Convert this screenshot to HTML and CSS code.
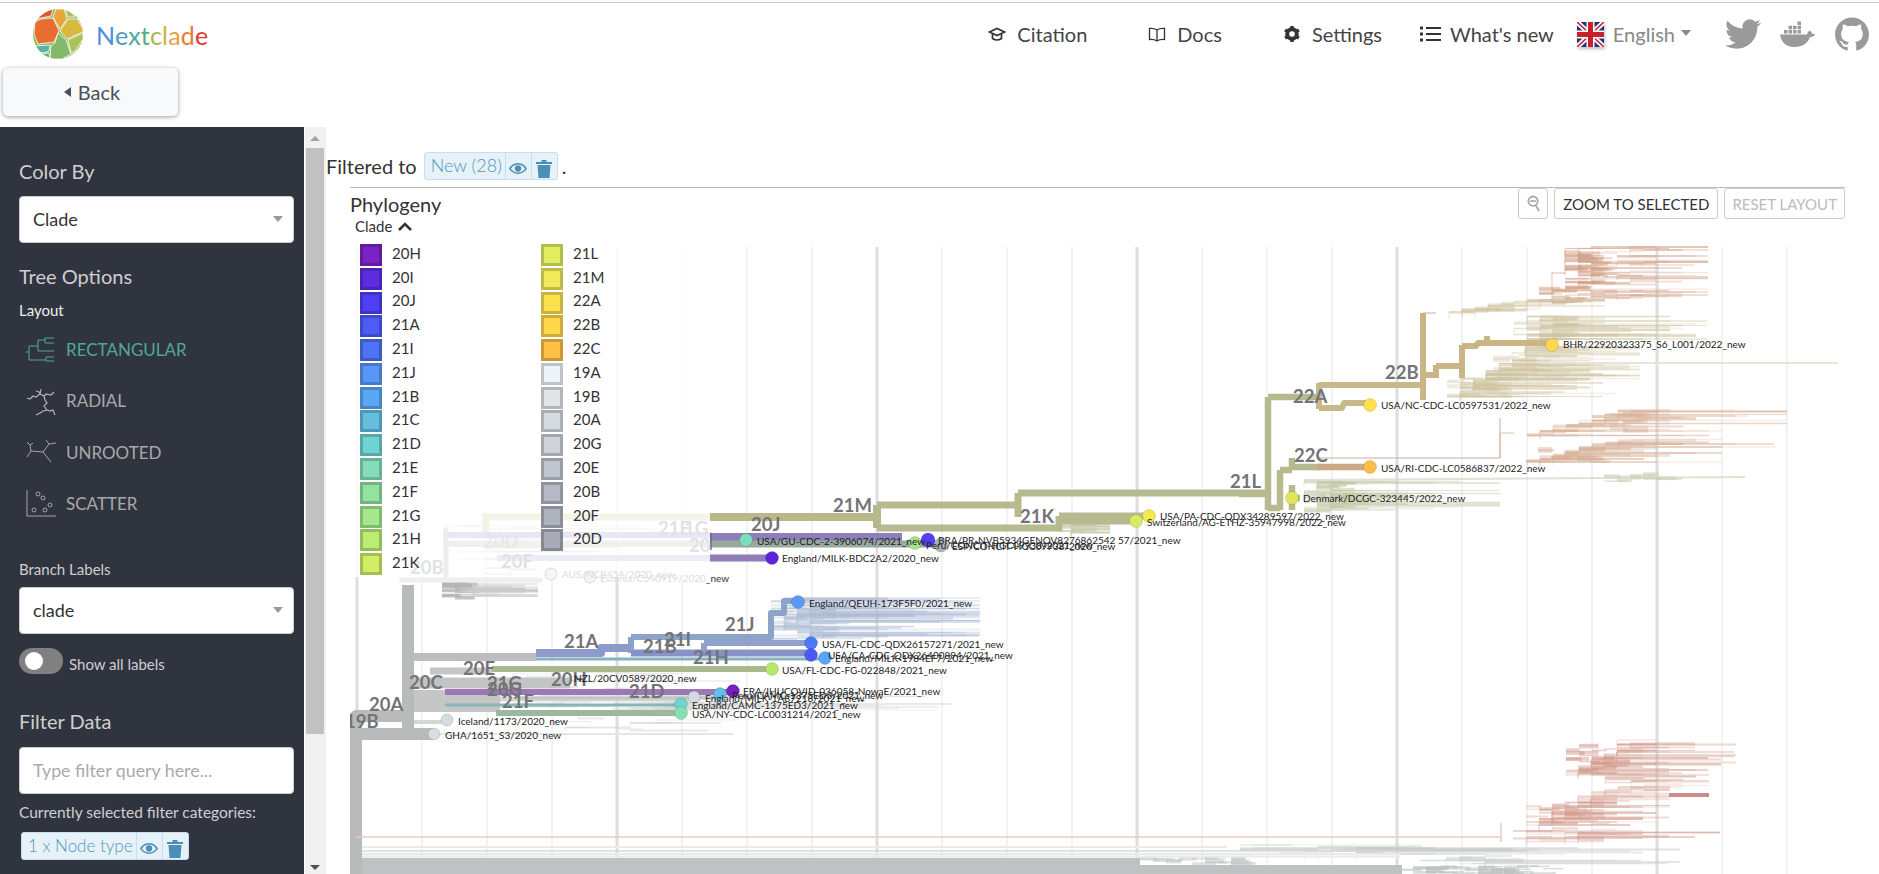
FILE: index.html
```html
<!DOCTYPE html>
<html lang="en">
<head>
 <meta charset="UTF-8">
 <title>Nextclade</title>
 <link rel="stylesheet" href="styles.css">
 <script src="tree.js" defer></script>
</head>
<body>

<!-- Kopfzeile -->
<header class="topbar">
 <a class="brand">
  <svg class="brand-logo" viewBox="0 0 50 50" width="50" height="50">
   <defs><clipPath id="logoclip"><circle cx="25" cy="25" r="25"/></clipPath></defs>
   <g clip-path="url(#logoclip)" stroke="#fff" stroke-width="0.8">
    <rect width="50" height="50" fill="#8fbb60" stroke="none"/>
    <polygon fill="#e96d30" points="2,13 8,10 20,9 26,22 21,33 5,35 1,25"/>
    <polygon fill="#e8a53a" points="20,8 23,0 31,0 34,10 27,20"/>
    <polygon fill="#d6b93e" points="35,10 44,10 50,20 50,23 34,30 27,22"/>
    <polygon fill="#a8c256" points="35,31 50,24 50,30 42,42 38,44"/>
    <polygon fill="#84b96a" points="25,24 33,31 38,45 29,50 17,50 18,37 22,34"/>
    <polygon fill="#5fb0a6" points="0,37 17,36 16,42 10,44 4,42"/>
    <polygon fill="#e2563a" points="3,9 12,1 20,0 18,7 8,9"/>
    <polygon fill="#b3bd58" points="32,0 38,3 42,8 35,8"/>
    <polygon fill="#5fa982" points="10,45 16,44 17,50 10,50"/>
    <polygon fill="#a8c256" points="39,45 44,42 50,50 40,50"/>
   </g>
  </svg>
  <span class="brand-name"><i class="c1">N</i><i class="c2">e</i><i class="c3">x</i><i class="c4">t</i><i class="c5">c</i><i class="c6">l</i><i class="c7">a</i><i class="c8">d</i><i class="c9">e</i></span>
 </a>

 <nav class="nav">
  <a class="nav-link nav-citation">
   <svg viewBox="0 0 18 18" width="18" height="18" fill="none" stroke="#333" stroke-width="1.7"><path d="M1.5 7 9 3.5 16.5 7 9 10.5Z"/><path d="M4.5 9v4.5Q9 16.500 13.500 13.500V9"/></svg>
   Citation
  </a>
  <a class="nav-link nav-docs">
   <svg viewBox="0 0 18 18" width="18" height="18" fill="none" stroke="#333" stroke-width="1.3"><path d="M9 5Q6 3 1.500 3.500V14.500Q6 14 9 16Q12 14 16.500 14.500V3.500Q12 3 9 5ZM9 5V16"/></svg>
   Docs
  </a>
  <a class="nav-link nav-settings">
   <svg viewBox="0 0 18 18" width="18" height="18"><circle cx="9" cy="9" r="5" fill="none" stroke="#333" stroke-width="3.600"/><g stroke="#333" stroke-width="3.400"><path d="M9 1v16"/><path d="M2.100 5 15.900 13"/><path d="M2.100 13 15.900 5"/></g><circle cx="9" cy="9" r="2.800" fill="#fff"/></svg>
   Settings
  </a>
  <a class="nav-link nav-new">
   <svg viewBox="0 0 21 18" width="21" height="18" fill="#333"><rect x="0" y="1.500" width="3" height="3"/><rect x="0" y="7.500" width="3" height="3"/><rect x="0" y="13.500" width="3" height="3"/><rect x="6" y="2" width="15" height="2"/><rect x="6" y="8" width="15" height="2"/><rect x="6" y="14" width="15" height="2"/></svg>
   What's new
  </a>
  <a class="lang">
   <svg class="lang-flag" viewBox="0 0 27 25" width="27" height="25">
    <rect width="27" height="25" fill="#22337a"/>
    <path d="M0 0 27 25M27 0 0 25" stroke="#fff" stroke-width="5"/>
    <path d="M0 0 27 25M27 0 0 25" stroke="#c8202f" stroke-width="1.600"/>
    <path d="M13.500 0V25M0 12.500H27" stroke="#fff" stroke-width="8"/>
    <path d="M13.500 0V25M0 12.500H27" stroke="#c8202f" stroke-width="5"/>
   </svg>
   English<span class="lang-caret"></span>
  </a>
  <svg class="soc soc-twitter" viewBox="0 0 24 24" width="36" height="36" fill="#9a9a9a"><path d="M23.953 4.57a10 10 0 01-2.825.775 4.958 4.958 0 002.163-2.723c-.951.555-2.005.959-3.127 1.184a4.92 4.92 0 00-8.384 4.482C7.69 8.095 4.067 6.13 1.64 3.162a4.822 4.822 0 00-.666 2.475c0 1.71.87 3.213 2.188 4.096a4.904 4.904 0 01-2.228-.616v.06a4.923 4.923 0 003.946 4.827 4.996 4.996 0 01-2.212.085 4.936 4.936 0 004.604 3.417 9.867 9.867 0 01-6.102 2.105c-.39 0-.779-.023-1.17-.067a13.995 13.995 0 007.557 2.209c9.053 0 13.998-7.496 13.998-13.985 0-.21 0-.42-.015-.63A9.935 9.935 0 0024 4.59z"/></svg>
  <svg class="soc soc-docker" viewBox="0 0 35 26" width="35" height="26" fill="#9a9a9a"><path d="M0 13.500H27C27.500 11 29 10 29.500 9.500C31 10.500 32 11.500 32 12.800C33 12.500 34 12.600 35 13.200C34 15.500 32 16 30 16C28 22 23 26 14 26C5 26 1 20 0 13.500Z"/><path d="M4 9h3.500v3.500H4zM8.500 9H12v3.500H8.500zM13 9h3.500v3.500H13zM17.500 9H21v3.500h-3.500zM8.500 4.800H12v3.500H8.500zM13 4.800h3.500v3.500H13zM17.500 4.800H21v3.500h-3.500zM17.500.5H21V4h-3.500z"/></svg>
  <svg class="soc soc-github" viewBox="0 0 24 24" width="34" height="34" fill="#9a9a9a"><path d="M12 .297c-6.63 0-12 5.373-12 12 0 5.303 3.438 9.8 8.205 11.385.6.113.82-.258.82-.577 0-.285-.01-1.04-.015-2.04-3.338.724-4.042-1.61-4.042-1.61C4.422 18.07 3.633 17.7 3.633 17.7c-1.087-.744.084-.729.084-.729 1.205.084 1.838 1.236 1.838 1.236 1.07 1.835 2.809 1.305 3.495.998.108-.776.417-1.305.76-1.605-2.665-.3-5.466-1.332-5.466-5.93 0-1.31.465-2.38 1.235-3.22-.135-.303-.54-1.523.105-3.176 0 0 1.005-.322 3.3 1.23.96-.267 1.98-.399 3-.405 1.02.006 2.04.138 3 .405 2.28-1.552 3.285-1.23 3.285-1.23.645 1.653.24 2.873.12 3.176.765.84 1.23 1.91 1.23 3.22 0 4.61-2.805 5.625-5.475 5.92.42.36.81 1.096.81 2.22 0 1.606-.015 2.896-.015 3.286 0 .315.21.69.825.57C20.565 22.092 24 17.592 24 12.297c0-6.627-5.373-12-12-12"/></svg>
 </nav>
</header>

<div class="backrow">
 <button class="back"><span class="back-caret"></span>Back</button>
</div>

<div class="page">

 <!-- Seitenleiste -->
 <aside class="sidebar">
  <h2 class="side-head side-colorby">Color By</h2>
  <div class="select select-colorby">Clade<span class="select-caret"></span></div>

  <h2 class="side-head side-tree">Tree Options</h2>
  <div class="side-label side-layout">Layout</div>
  <div class="layouts">
   <div class="layout layout-on">
    <svg viewBox="0 0 30 25" width="30" height="25" fill="none" stroke="#4fa79a" stroke-width="1"><path d="M0 15H3M3 9V23M3 9H12M12 3V14M12 3H19M19 1V6M19 1H28M19 6H28M12 14H28M3 23H20M20 20V24M20 20H28M20 24H28"/></svg>
    RECTANGULAR
   </div>
   <div class="layout">
    <svg viewBox="0 0 30 30" width="30" height="30" fill="none" stroke="#b5b5b5" stroke-width="1.200"><path d="M1 12 4 13 7 10 10 11 14 8 15 3M14 8 18 10 20 8 25 9 28 6M18 10 19 14 21 17 18 20 21 24M21 24 17 25 14 27 10 29M21 24 24 25 27 24 29 29M14 8 13 6 10 5"/></svg>
    RADIAL
   </div>
   <div class="layout">
    <svg viewBox="0 0 30 26" width="30" height="26" fill="none" stroke="#a5a5a5" stroke-width="1"><path d="M5 12 17 13M5 12 4 6 1 3M4 6 7 4M5 12 1 18M17 13 23 5 20 1M23 5 30 4M17 13 25 23"/></svg>
    UNROOTED
   </div>
   <div class="layout">
    <svg viewBox="0 0 30 27" width="30" height="27" fill="none" stroke="#a5a5a5" stroke-width="1"><path d="M1 0V26H30"/><circle cx="12" cy="4" r="2"/><circle cx="17" cy="8" r="2"/><circle cx="24" cy="15" r="2"/><circle cx="19" cy="20" r="2"/><circle cx="8" cy="20" r="2"/></svg>
    SCATTER
   </div>
  </div>

  <div class="side-label side-branch">Branch Labels</div>
  <div class="select select-branch">clade<span class="select-caret"></span></div>
  <div class="toggle"><span class="toggle-track"><span class="toggle-knob"></span></span><span class="toggle-text">Show all labels</span></div>

  <h2 class="side-head side-filter">Filter Data</h2>
  <div class="select select-filter">Type filter query here...</div>
  <div class="side-label side-current">Currently selected filter categories:</div>
  <div class="chip chip-side">
   <span class="chip-text">1 x Node type</span>
   <span class="chip-btn"><svg viewBox="0 0 20 14" width="18" height="13" fill="#4a8fb8"><path d="M10 1C5 1 1.500 4.500 0 7C1.500 9.500 5 13 10 13S18.500 9.500 20 7C18.500 4.500 15 1 10 1ZM10 11.500C6 11.500 3.500 9 2 7C3.500 5 6 2.500 10 2.500S16.500 5 18 7C16.500 9 14 11.500 10 11.500Z"/><circle cx="10" cy="7" r="3.500"/></svg></span>
   <span class="chip-btn"><svg viewBox="0 0 16 18" width="16" height="18" fill="#4a8fb8"><path d="M0 2H5.500V0H10.500V2H16V4H0ZM1.500 5H14.500L13.500 18H2.500Z"/></svg></span>
  </div>
 </aside>

 <div class="scrollbar">
  <span class="scroll-up"></span>
  <span class="scroll-thumb"></span>
  <span class="scroll-down"></span>
 </div>

 <!-- Hauptbereich -->
 <main class="main">
  <div class="filtered">
   Filtered to
   <div class="chip chip-main">
    <span class="chip-text">New (28)</span>
    <span class="chip-btn"><svg viewBox="0 0 20 14" width="18" height="13" fill="#4a8fb8"><path d="M10 1C5 1 1.500 4.500 0 7C1.500 9.500 5 13 10 13S18.500 9.500 20 7C18.500 4.500 15 1 10 1ZM10 11.500C6 11.500 3.500 9 2 7C3.500 5 6 2.500 10 2.500S16.500 5 18 7C16.500 9 14 11.500 10 11.500Z"/><circle cx="10" cy="7" r="3.500"/></svg></span>
    <span class="chip-btn"><svg viewBox="0 0 16 18" width="16" height="18" fill="#4a8fb8"><path d="M0 2H5.500V0H10.500V2H16V4H0ZM1.500 5H14.500L13.500 18H2.500Z"/></svg></span>
   </div>
   .
  </div>

  <section class="panel">
   <div class="panel-top">
    <div class="panel-title">Phylogeny</div>
    <div class="panel-btns">
     <button class="pbtn pbtn-icon"><svg viewBox="0 0 14 18" width="13" height="17" fill="none" stroke="#aaa" stroke-width="2"><circle cx="6.500" cy="6.500" r="5"/><path d="M3.500 6.500H9.500M9.500 11 13 17"/></svg></button>
     <button class="pbtn">ZOOM TO SELECTED</button>
     <button class="pbtn pbtn-off">RESET LAYOUT</button>
    </div>
   </div>
   <div class="legend-name">Clade <svg viewBox="0 0 14 9" width="14" height="9" fill="none" stroke="#333" stroke-width="2.600"><path d="M1 8 7 2 13 8"/></svg></div>

   <div class="tree">
    <svg class="tree-svg" viewBox="350 245 1495 629" width="1495" height="629">
     <g id="gridlines">
      <path class="grid-thin" d="M422 247V874M487 247V874M552 247V874M682 247V874M747 247V874M812 247V874M942 247V874M1007 247V874M1072 247V874M1202 247V874M1267 247V874M1332 247V874M1462 247V874M1527 247V874M1592 247V874M1722 247V874M1787 247V874"/>
      <path class="grid-thick" d="M357 247V874M617 247V874M877 247V874M1137 247V874M1397 247V874M1657 247V874"/>
     </g>
     <rect x="350" y="245" width="360" height="332" fill="#fff" opacity="0.85"/>
     <g id="bushes"></g>

     <!-- ausgeblendete Aeste -->
     <g fill="none" stroke-linecap="square">
      <path stroke="#f3f3e8" stroke-width="7" d="M486 517H710M486 517V532"/>
      <path stroke="#e9e7f3" stroke-width="6" d="M446 535H710"/>
      <path stroke="#eff1ef" stroke-width="6" d="M446 544H710"/>
      <path stroke="#ececf5" stroke-width="6" d="M500 558H710"/>
      <path stroke="#ededed" stroke-width="5" d="M446 530V578"/>
      <path stroke="#eeeeee" stroke-width="5" d="M402 580H540"/>
     </g>

     <!-- grau, Wurzel -->
     <g fill="none" stroke="#b9bbbb" stroke-linejoin="round">
      <path stroke-width="12" d="M356 874V716H408M356 734H434M408 585V734"/>
      <path stroke-width="8" d="M414 657H536" stroke="#bcbdbd"/>
      <path stroke-width="7" d="M430 671H492" stroke="#c5c6c6"/>
      <path stroke-width="11" d="M414 683H570" stroke="#c2c3c3"/>
      <path stroke-width="22" d="M414 701H500" stroke="#c5c6c6"/>
      <path stroke-width="5" d="M500 699H700" stroke="#d6d7d7"/>
      <path stroke-width="4" d="M414 722H447" stroke="#d5d6d6"/>
      <path stroke-width="2" d="M434 734H733" stroke="#e4e5e5"/>
     </g>
     <rect x="362" y="858" width="778" height="7" fill="#bfc2c2"/>
     <rect x="362" y="865" width="1040" height="9" fill="#bfc2c2"/>
     <path class="trunk-fine" d="M362 847H1227M362 854H1400M362 856.500H1400"/>
     <path class="trunk-line" d="M362 851H1400"/>
     <path class="salmon-line" d="M356 837H1500"/>

     <!-- farbige Aeste -->
     <g fill="none" stroke-linejoin="round">
      <path stroke="#b9b88a" stroke-width="8" d="M710 517H877M877 505V528"/>
      <path stroke="#b7ba8e" stroke-width="7" d="M877 505H1018V517M1018 493H1266M1018 493V517M877 528H1062"/>
      <path stroke="#b7ba8e" stroke-width="7" d="M1059 516H1146M1059 516V530M1059 521H1136"/>
      <path stroke="#b7ba8e" stroke-width="6.500" d="M1239 494H1266M1268 397V510M1268 397H1319M1268 508H1280M1280 470V510M1280 470H1292M1292 458V470M1292 467H1320M1292 485V510M1292 498H1300"/>
      <path stroke="#c8b98a" stroke-width="6" d="M1319 383V409M1319 385H1422M1319 408H1342L1344 403H1370"/>
      <path stroke="#c9b586" stroke-width="6" d="M1423 313V400M1423 375H1436M1436 365V378M1436 366H1462M1462 345V378M1462 346H1476L1478 343H1552M1487 336V343"/>
      <path stroke="#c9aa82" stroke-width="6.500" d="M1317 467H1370"/>
      <path stroke="#c8ad9a" stroke-width="1" d="M1423 313H1436M1317 458H1500M1500 418V458"/>

      <path stroke="#8c80bb" stroke-width="8" d="M710 537H902"/>
      <path stroke="#99a99e" stroke-width="7" d="M710 544H940"/>
      <path stroke="#8d7eb8" stroke-width="7" d="M710 558H772"/>
      <path stroke="#66707a" stroke-width="1.500" d="M711 533V550"/>

      <path stroke="#8ea3c9" stroke-width="6" d="M631 637H771V613H784V601H798M771 637V615M631 637V653"/>
      <path stroke="#8d9bca" stroke-width="8" d="M536 653H601V648H631"/>
      <path stroke="#8792c8" stroke-width="7" d="M631 653H811"/>
      <path stroke="#90a2cc" stroke-width="6" d="M704 643H811M704 643V650"/>
      <path stroke="#88b0c0" stroke-width="3" d="M536 659H825"/>
      <path stroke="#a9b88f" stroke-width="6" d="M492 669H772"/>
      <path stroke="#9c78b4" stroke-width="6" d="M445 692H733"/>
      <path stroke="#c2c6c4" stroke-width="3" d="M520 698H720"/>
      <path stroke="#88b5b5" stroke-width="3" d="M445 705H681"/>
      <path stroke="#9cb8a0" stroke-width="6" d="M496 713H681"/>
     </g>

     <!-- Knoten -->
     <g class="nodes">
      <circle cx="551" cy="574" r="6" fill="#f4f5f7" stroke="#e8e9ea"/>
      <circle cx="590" cy="577" r="6" fill="#f4f5f7" stroke="#e8e9ea"/>
      <circle cx="746" cy="540" r="6.500" fill="#7ddcba"/>
      <circle cx="915" cy="543" r="6.500" fill="#a5e38d"/>
      <circle cx="928" cy="540" r="7" fill="#5340f0"/>
      <circle cx="941" cy="545" r="7" fill="#aeb1b8"/>
      <circle cx="772" cy="558" r="6.500" fill="#5b25dc"/>
      <circle cx="798" cy="602" r="6.500" fill="#5a99f5"/>
      <circle cx="811" cy="643" r="6.500" fill="#4a7af5"/>
      <circle cx="811" cy="655" r="6.500" fill="#4a5bf5"/>
      <circle cx="825" cy="658" r="6.500" fill="#58a7f5"/>
      <circle cx="772" cy="669" r="6.500" fill="#b6e86a"/>
      <circle cx="694" cy="697" r="6" fill="#d5dae0"/>
      <circle cx="720" cy="702" r="6" fill="#d5dae0"/>
      <circle cx="720" cy="694" r="6.500" fill="#63bfe5"/>
      <circle cx="733" cy="691" r="6.500" fill="#7520c0"/>
      <circle cx="681" cy="704" r="6.500" fill="#6fd3d0"/>
      <circle cx="681" cy="713" r="6.500" fill="#85e0b4"/>
      <circle cx="447" cy="720" r="6" fill="#d5dae2"/>
      <circle cx="434" cy="734" r="6" fill="#d8dde2"/>
      <circle cx="1149" cy="516" r="6.500" fill="#f3e84f"/>
      <circle cx="1136" cy="521" r="6.500" fill="#d6ec62"/>
      <circle cx="1292" cy="498" r="6.500" fill="#dfe659"/>
      <circle cx="1370" cy="467" r="6.500" fill="#ffbe47"/>
      <circle cx="1370" cy="405" r="6.500" fill="#ffe14f"/>
      <circle cx="1552" cy="345" r="6.500" fill="#ffd84d"/>
     </g>

     <!-- Klassen -->
     <g class="clade">
      <text class="clade-faint" x="483" y="548" opacity="0.55">20D</text>
      <text class="clade-faint" x="501" y="568">20F</text>
      <text class="clade-faint" x="410" y="574">20B</text>
      <text class="clade-faint" x="658" y="535">21E</text>
      <text class="clade-faint" x="684" y="535">1G</text>
      <text class="clade-faint" x="689" y="552">20</text>
      <text x="833" y="512">21M</text>
      <text x="1020" y="523">21K</text>
      <text x="751" y="531">20J</text>
      <text x="1230" y="488">21L</text>
      <text x="1293" y="403">22A</text>
      <text x="1385" y="379">22B</text>
      <text x="1294" y="462">22C</text>
      <text x="564" y="648">21A</text>
      <text x="664" y="646">21I</text>
      <text x="643" y="653">21B</text>
      <text x="725" y="631">21J</text>
      <text x="693" y="664">21H</text>
      <text x="463" y="675">20E</text>
      <text x="409" y="689">20C</text>
      <text x="487" y="690">21G</text>
      <text x="487" y="696">20G</text>
      <text x="502" y="708">21F</text>
      <text x="551" y="686">20H</text>
      <text x="629" y="698">21D</text>
      <text x="369" y="711">20A</text>
      <text x="345" y="728">19B</text>
     </g>

     <!-- Spitzen -->
     <g class="tips" transform="translate(0 1)">
      <text class="tip-faint" x="562" y="577">AUS/NCB454/2020_new</text>
      <text class="tip-faint" x="600" y="581">Estonia/C640919/2020<tspan class="tip-dark">_new</tspan></text>
      <text x="757" y="544">USA/GU-CDC-2-3906074/2021_new</text>
      <text x="938" y="543">BRA/PR-NVB5934GENOV8276862542 57/2021_new</text>
      <text x="926" y="548">Peru/CONCIT-HGC09938/2021_new</text>
      <text x="952" y="549">ESP/CONCIT-HGC09938/2020_new</text>
      <text x="782" y="561">England/MILK-BDC2A2/2020_new</text>
      <text x="809" y="606">England/QEUH-173F5F0/2021_new</text>
      <text x="822" y="647">USA/FL-CDC-QDX26157271/2021_new</text>
      <text x="828" y="658">USA/CA-CDC-QDX26400894/2021_new</text>
      <text x="835" y="661">England/MILK-1984EF7/2021_new</text>
      <text x="782" y="673">USA/FL-CDC-FG-022848/2021_new</text>
      <text x="574" y="681">NZL/20CV0589/2020_new</text>
      <text x="743" y="694">FRA/IHUCOVID-036058-NowaE/2021_new</text>
      <text x="705" y="701">England/MILK-1A87218/2021_new</text>
      <text x="732" y="698">Peru/CAMC-1375ED3/2021_new</text>
      <text x="692" y="708">England/CAMC-1375ED3/2021_new</text>
      <text x="692" y="717">USA/NY-CDC-LC0031214/2021_new</text>
      <text x="458" y="724">Iceland/1173/2020_new</text>
      <text x="445" y="738">GHA/1651_S3/2020_new</text>
      <text x="1160" y="519">USA/PA-CDC-QDX34289597/2022_new</text>
      <text x="1147" y="525">Switzerland/AG-ETHZ-35947998/2022_new</text>
      <text x="1303" y="501">Denmark/DCGC-323445/2022_new</text>
      <text x="1381" y="471">USA/RI-CDC-LC0586837/2022_new</text>
      <text x="1381" y="408">USA/NC-CDC-LC0597531/2022_new</text>
      <text x="1563" y="347">BHR/22920323375_S6_L001/2022_new</text>
     </g>
    </svg>

    <div class="legend">
     <div class="legend-item"><i style="background:#7a22c4"></i>20H</div>
     <div class="legend-item"><i style="background:#5f2de0"></i>20I</div>
     <div class="legend-item"><i style="background:#5040f5"></i>20J</div>
     <div class="legend-item"><i style="background:#4d5cf5"></i>21A</div>
     <div class="legend-item"><i style="background:#4c74f5"></i>21I</div>
     <div class="legend-item"><i style="background:#5a96f8"></i>21J</div>
     <div class="legend-item"><i style="background:#5aa8f5"></i>21B</div>
     <div class="legend-item"><i style="background:#65bde0"></i>21C</div>
     <div class="legend-item"><i style="background:#70d2d2"></i>21D</div>
     <div class="legend-item"><i style="background:#84dcba"></i>21E</div>
     <div class="legend-item"><i style="background:#92e2a0"></i>21F</div>
     <div class="legend-item"><i style="background:#a5e88e"></i>21G</div>
     <div class="legend-item"><i style="background:#bbec74"></i>21H</div>
     <div class="legend-item"><i style="background:#d0ee66"></i>21K</div>
     <div class="legend-item"><i style="background:#e0ee60"></i>21L</div>
     <div class="legend-item"><i style="background:#f0ea58"></i>21M</div>
     <div class="legend-item"><i style="background:#fde250"></i>22A</div>
     <div class="legend-item"><i style="background:#ffd84a"></i>22B</div>
     <div class="legend-item"><i style="background:#ffc048"></i>22C</div>
     <div class="legend-item"><i style="background:#eff4f8"></i>19A</div>
     <div class="legend-item"><i style="background:#e0e5ea"></i>19B</div>
     <div class="legend-item"><i style="background:#d6dbe2"></i>20A</div>
     <div class="legend-item"><i style="background:#ced3da"></i>20G</div>
     <div class="legend-item"><i style="background:#c0c5ce"></i>20E</div>
     <div class="legend-item"><i style="background:#b5bac4"></i>20B</div>
     <div class="legend-item"><i style="background:#afb3be"></i>20F</div>
     <div class="legend-item"><i style="background:#a8acb6"></i>20D</div>
    </div>
   </div>
  </section>
 </main>
</div>

</body>
</html>
```

FILE: styles.css
```css
* {
 box-sizing: border-box;
}

html,
body {
 height: 100%;
}

body {
 margin: 0;
 overflow: hidden;
 font-family: Lato, "Open Sans", sans-serif;
 color: #333;
 background: #fff;
}

h2 {
 margin: 0;
 font-weight: 400;
}

/* Kopfzeile */
.topbar {
 display: flex;
 align-items: center;
 justify-content: space-between;
 height: 63px;
 margin-top: 2px;
 padding: 0 10px 0 33px;
 border-top: 1px solid #ccc;
}

.brand {
 display: flex;
 align-items: center;
 gap: 13px;
}

.brand-logo {
 display: block;
}

.brand-name {
 font-size: 25px;
 letter-spacing: 0.2px;
 margin-top: 1px;
}

.brand-name i {
 font-style: normal;
}

.c1 { color: #4a8ede; }
.c2 { color: #4a9cc0; }
.c3 { color: #4fa8a0; }
.c4 { color: #5bb07a; }
.c5 { color: #a0b84e; }
.c6 { color: #c9b53f; }
.c7 { color: #e8a040; }
.c8 { color: #e87a35; }
.c9 { color: #e0392b; }

.nav {
 display: flex;
 align-items: center;
 font-size: 20px;
}

.nav-link {
 display: flex;
 align-items: center;
 gap: 11px;
 color: #444;
}

.nav-docs,
.nav-settings {
 margin-left: 61px;
}

.nav-new {
 margin-left: 38px;
 gap: 9px;
}

.lang {
 display: flex;
 align-items: center;
 margin-left: 23px;
 color: #888;
}

.lang-flag {
 margin-right: 9px;
 box-shadow: 1px 2px 3px rgba(0, 0, 0, 0.25);
}

.lang-caret {
 width: 0;
 height: 0;
 margin: 0 0 3px 6px;
 border-left: 5.5px solid transparent;
 border-right: 5.5px solid transparent;
 border-top: 6px solid #888;
}

.soc {
 display: block;
}

.soc-twitter { margin-left: 34px; }
.soc-docker { margin-left: 19px; }
.soc-github { margin-left: 20px; }

/* Zurueck */
.backrow {
 height: 62px;
 padding: 3px 0 0 3px;
}

.back {
 display: flex;
 align-items: center;
 justify-content: center;
 width: 175px;
 height: 48px;
 padding: 0 0 0 3px;
 border: 0;
 border-radius: 5px;
 background: #f8f9fa;
 box-shadow: 0 1px 4px rgba(0, 0, 0, 0.4);
 font: inherit;
 font-size: 20px;
 color: #495057;
}

.back-caret {
 width: 0;
 height: 0;
 margin-right: 7px;
 border-top: 5.5px solid transparent;
 border-bottom: 5.5px solid transparent;
 border-right: 7px solid #495057;
}

.page {
 display: flex;
 height: calc(100vh - 127px);
}

/* Seitenleiste */
.sidebar {
 flex: 0 0 304px;
 padding: 32px 10px 0 19px;
 background: #30343f;
 color: #cfcfcf;
 overflow: hidden;
}

.side-head {
 font-size: 20px;
 line-height: 24px;
}

.side-label {
 font-size: 15px;
 line-height: 18px;
}

.select {
 position: relative;
 height: 47px;
 padding-left: 13px;
 border: 1px solid #ccc;
 border-radius: 4px;
 background: #fff;
 color: #333;
 font-size: 18px;
 line-height: 45px;
}

.select-caret {
 position: absolute;
 right: 10px;
 top: 19px;
 width: 0;
 height: 0;
 border-left: 5.5px solid transparent;
 border-right: 5.5px solid transparent;
 border-top: 6px solid #999;
}

.select-colorby { margin-top: 13px; }
.side-tree { margin-top: 21px; }
.side-layout { margin-top: 13px; color: #eee; }

.layouts {
 margin-top: 5px;
}

.layout {
 display: flex;
 align-items: center;
 gap: 10px;
 height: 51.3px;
 padding-left: 7px;
 font-size: 17px;
 color: #a9a9a9;
}

.layout-on {
 color: #4fa79a;
}

.side-branch { margin-top: 31px; }
.select-branch { margin-top: 9px; }

.toggle {
 display: flex;
 align-items: center;
 gap: 6px;
 margin-top: 14px;
 font-size: 15px;
}

.toggle-text {
 margin-top: 5px;
}

.toggle-track {
 display: block;
 width: 44px;
 height: 26px;
 padding: 4px 6px;
 border-radius: 13px;
 background: #808080;
}

.toggle-knob {
 display: block;
 width: 18px;
 height: 18px;
 border-radius: 50%;
 background: #fff;
}

.side-filter { margin-top: 35px; }

.select-filter {
 margin-top: 14px;
 color: #aaa;
 font-size: 17.8px;
}

.side-current {
 margin-top: 9px;
 font-size: 15.5px;
}

/* Filterchip */
.chip {
 display: inline-flex;
 align-items: stretch;
 height: 28px;
 border: 1px solid #c5dff0;
 border-radius: 3px;
 background: #e7f2f8;
 color: #5097ba;
 font-size: 17px;
 font-weight: 300;
}

.chip-text {
 padding: 0 3px 0 6px;
 line-height: 25px;
 white-space: nowrap;
}

.chip-btn {
 display: flex;
 align-items: center;
 justify-content: center;
 width: 26px;
 padding-top: 5px;
 border-left: 1px solid #c5dff0;
}

.chip-side {
 margin: 11px 0 0 2px;
}

/* Scrollleiste */
.scrollbar {
 position: relative;
 flex: 0 0 21px;
 margin-left: 1px;
 background: #f1f1f1;
}

.scroll-thumb {
 position: absolute;
 left: 1px;
 right: 2px;
 top: 21px;
 height: 586px;
 background: #c1c1c1;
}

.scroll-up,
.scroll-down {
 position: absolute;
 left: 5px;
 width: 0;
 height: 0;
 border-left: 5px solid transparent;
 border-right: 5px solid transparent;
}

.scroll-up {
 top: 9px;
 border-bottom: 5px solid #a3a3a3;
}

.scroll-down {
 bottom: 4px;
 border-top: 5px solid #505050;
}

/* Hauptbereich */
.main {
 flex: 1;
 min-width: 0;
 padding-top: 25px;
}

.filtered {
 display: flex;
 align-items: center;
 gap: 4px;
 height: 28px;
 font-size: 20px;
}

.chip-main {
 margin-left: 3px;
 font-size: 18px;
}

.panel {
 position: relative;
 width: 1495px;
 margin: 7px 0 0 24px;
 border-top: 1px solid #bbb;
}

.panel-top {
 display: flex;
 justify-content: space-between;
 height: 26px;
}

.panel-title {
 padding-top: 4px;
 font-size: 20px;
 line-height: 24px;
}

.panel-btns {
 display: flex;
 gap: 6px;
}

.pbtn {
 height: 31px;
 padding: 0 8px;
 border: 1px solid #ccc;
 border-radius: 3px;
 background: #fff;
 font: inherit;
 font-size: 15px;
 color: #333;
}

.pbtn-icon {
 width: 30px;
 padding: 2px 0 0;
}

.pbtn-off {
 padding: 0 7px;
 color: #bbb;
}

.legend-name {
 display: flex;
 align-items: center;
 gap: 6px;
 height: 24px;
 margin-bottom: 7px;
 padding-left: 5px;
 font-size: 15px;
}

.tree {
 position: relative;
 height: 629px;
}

.tree-svg {
 display: block;
}

.legend {
 position: absolute;
 left: 10px;
 top: -2px;
 display: grid;
 grid-auto-flow: column;
 grid-template-rows: repeat(14, 23.8px);
 grid-template-columns: 181px 100px;
}

.legend-item {
 display: flex;
 align-items: center;
 gap: 10px;
 padding-bottom: 4px;
 font-size: 15px;
 color: #333;
}

.legend-item i {
 display: block;
 width: 22px;
 height: 22px;
 margin-top: 4px;
 box-shadow: inset 0 0 0 3px rgba(0, 0, 0, 0.2);
}

/* Baum */
.grid-thin {
 fill: none;
 stroke: #eeeeee;
 stroke-width: 1.5;
}

.grid-thick {
 fill: none;
 stroke: #dedede;
 stroke-width: 3;
}

.trunk-fine {
 fill: none;
 stroke: #e9eaea;
 stroke-width: 2;
}

.trunk-line {
 fill: none;
 stroke: #d6d8d8;
 stroke-width: 1.5;
}

.salmon-line {
 fill: none;
 stroke: #ebcabf;
 stroke-width: 1.5;
}

.nodes circle {
 stroke-width: 1;
 stroke: rgba(0, 0, 0, 0.12);
}

.clade text {
 font-size: 18.5px;
 font-weight: 700;
 fill: #737378;
}

.clade .clade-faint {
 fill: #e2e2e4;
}

.tips text {
 font-size: 10px;
 fill: #1c1c1c;
}

.tips .tip-faint {
 fill: #dcdcdc;
}

.tips .tip-dark {
 fill: #333;
}
```

FILE: tree.js
```js
/* Buesche fuer den Baum */

var saat = 41;

// Zufall mit fester Saat
function zz() {
 saat = (saat * 16807) % 2147483647;
 return (saat - 1) / 2147483646;
}

function strich(g, x1, y1, x2, y2, farbe, breite, alpha) {
 var l = document.createElementNS("http://www.w3.org/2000/svg", "line");
 l.setAttribute("x1", x1);
 l.setAttribute("y1", y1);
 l.setAttribute("x2", x2);
 l.setAttribute("y2", y2);
 l.setAttribute("stroke", farbe);
 l.setAttribute("stroke-width", breite);
 l.setAttribute("opacity", alpha);
 g.appendChild(l);
}

// x0..x1 Startbereich, xe Ende, y0..y1 Hoehe
// neigung: 0 = gerade Kante, 1 = unten links nach oben rechts
function busch(g, x0, x1, xe, y0, y1, farbe, n, staerke, neigung) {
 neigung = neigung || 0;
 for (var i = 0; i < n; i++) {
  var t = zz();
  var y = y0 + Math.round(t * (y1 - y0) / 1.5) * 1.5;
  var a = (1 - t) * neigung + zz() * (1 - neigung);
  var s = x0 + Math.round(a * (x1 - x0) / 13) * 13;
  var r = zz();
  var e = s + 13 * Math.ceil(r * r * (xe - x1 + 40) / 13) + 13;
  strich(g, s, y, Math.min(e, xe), y, farbe, 1 + zz(), staerke * (0.35 + zz() * 0.65));
  if (zz() < 0.3) {
   strich(g, s, y, s, y + 3 + zz() * 6, farbe, 1, staerke * 0.6);
  }
 }
}

function bloecke(g, x0, x1, y0, y1, farbe, n, alpha) {
 for (var i = 0; i < n; i++) {
  var y = y0 + zz() * (y1 - y0);
  var x = x0 + Math.round(zz() * (x1 - x0) / 13) * 13;
  strich(g, x, y, x + 13 + zz() * 13, y, farbe, 1 + zz() * 3, alpha);
 }
}

function bauen() {
 var g = document.getElementById("bushes");

 // oben, 22B
 busch(g, 1565, 1640, 1708, 247, 298, "#d4a58c", 85, 0.6);
 bloecke(g, 1565, 1592, 251, 287, "#d19f85", 48, 0.45);
 bloecke(g, 1539, 1565, 287, 303, "#d4a88e", 18, 0.55);
 strich(g, 1552, 272, 1552, 300, "#d4a58c", 1, 0.7);
 strich(g, 1552, 273, 1565, 273, "#d4a58c", 1, 0.7);
 strich(g, 1565, 250, 1565, 275, "#d4a58c", 1, 0.7);
 busch(g, 1436, 1540, 1605, 300, 313, "#cfc3a0", 30, 0.7, 0.8);
 busch(g, 1514, 1560, 1707, 315, 340, "#cfc4a0", 50, 0.6);
 bloecke(g, 1527, 1560, 316, 340, "#cfc5a3", 18, 0.35);
 busch(g, 1447, 1540, 1640, 347, 397, "#cfc4a0", 100, 0.6, 0.85);
 bloecke(g, 1447, 1500, 378, 395, "#cfc5a3", 26, 0.4);
 bloecke(g, 1480, 1540, 355, 378, "#cfc5a3", 20, 0.35);
 strich(g, 1540, 363, 1838, 363, "#e8e2cf", 2, 0.9);

 // 22C
 busch(g, 1514, 1640, 1787, 410, 436, "#d9b49c", 60, 0.6, 0.85);
 busch(g, 1514, 1640, 1775, 438, 463, "#d9b49c", 60, 0.6, 0.85);
 bloecke(g, 1610, 1645, 412, 432, "#d9b49c", 14, 0.4);
 bloecke(g, 1525, 1590, 448, 462, "#d6ab92", 14, 0.4);
 strich(g, 1500, 433, 1500, 458, "#d9b49c", 1, 0.8);
 strich(g, 1500, 433, 1514, 433, "#d9b49c", 1, 0.8);

 // 21L
 busch(g, 1304, 1340, 1500, 480, 512, "#c9cdb0", 60, 0.7);
 bloecke(g, 1304, 1340, 482, 512, "#c5caa8", 26, 0.5);
 bloecke(g, 1604, 1660, 474, 482, "#c9cdb0", 12, 0.5);
 strich(g, 1304, 480, 1745, 477, "#d4d7c2", 2, 0.7);

 // unten
 busch(g, 1565, 1640, 1736, 740, 775, "#d49e90", 55, 0.6, 0.7);
 bloecke(g, 1566, 1600, 742, 772, "#cf9183", 20, 0.45);
 busch(g, 1605, 1650, 1709, 775, 790, "#d8ab9b", 22, 0.6);
 busch(g, 1526, 1610, 1670, 792, 825, "#d49e90", 60, 0.6, 0.7);
 bloecke(g, 1526, 1590, 805, 825, "#d69f8e", 24, 0.4);
 busch(g, 1513, 1590, 1720, 828, 842, "#d49e90", 26, 0.6);
 strich(g, 1669, 795, 1709, 795, "#c97f7f", 4, 0.9);
 strich(g, 1501, 823, 1501, 842, "#d49e90", 1, 0.8);
 busch(g, 1227, 1400, 1680, 845, 855, "#c7caca", 30, 0.7);
 busch(g, 1420, 1500, 1680, 856, 864, "#c7caca", 14, 0.7);
 bloecke(g, 1400, 1540, 866, 874, "#bfc2c2", 50, 0.6);
 bloecke(g, 1140, 1240, 858, 864, "#c6c8c8", 20, 0.55);

 // Mitte
 busch(g, 771, 820, 980, 598, 640, "#aab9d4", 100, 0.6);
 bloecke(g, 771, 830, 604, 636, "#b4c2d9", 30, 0.4);
 busch(g, 1058, 1075, 1110, 522, 533, "#c5caa8", 24, 0.7);
 bloecke(g, 442, 460, 583, 598, "#b4b6b6", 18, 0.8);
 busch(g, 460, 480, 538, 584, 596, "#c9caca", 22, 0.8);
 busch(g, 500, 660, 740, 672, 735, "#d5d6d6", 40, 0.7);
 busch(g, 600, 680, 960, 695, 710, "#d5d8d8", 30, 0.7);
 busch(g, 446, 520, 700, 526, 576, "#efefef", 30, 0.8);
}

window.addEventListener("DOMContentLoaded", bauen);
```
